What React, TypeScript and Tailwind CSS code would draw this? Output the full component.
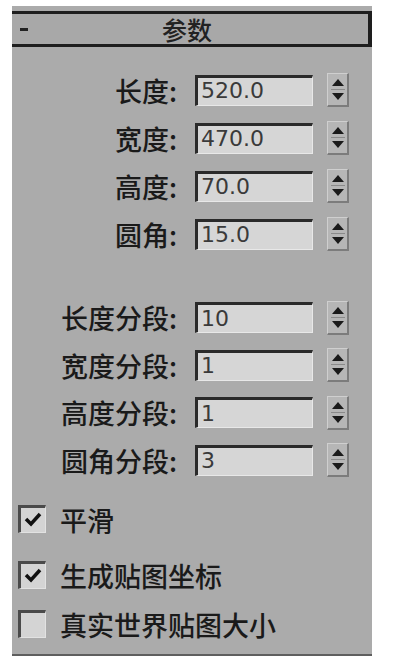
import React from "react";

const cjk = { fontFamily: '"Noto Sans CJK SC", "Noto Sans", sans-serif' };
const num = { fontFamily: '"DejaVu Sans", "Liberation Sans", sans-serif' };

function Spinner() {
  return (
    <div className="w-[22px] h-[34px] bg-[#b6b6b6] border-t border-l border-[#cfcfcf] border-r-2 border-b-2 border-r-[#7c7c7c] border-b-[#7c7c7c] flex flex-col items-center justify-between py-[5px]">
      <svg width="12" height="7" viewBox="0 0 12 7">
        <polygon points="6,0 12,7 0,7" fill="#1a1a1a" />
      </svg>
      <div className="w-[14px] h-px bg-[#8a8a8a]" />
      <svg width="12" height="7" viewBox="0 0 12 7">
        <polygon points="0,0 12,0 6,7" fill="#1a1a1a" />
      </svg>
    </div>
  );
}

function Field({ label, value }: { label: string; value: string }) {
  return (
    <div className="flex items-center h-full">
      <div className="w-[165px] text-right text-[27px] font-medium text-[#1a1a1a] leading-none" style={cjk}>
        {label}:
      </div>
      <div className="ml-[18px] w-[118px] h-[31px] bg-[#d6d6d6] border-t-[3px] border-l-[3px] border-[#2a2a2a] border-r border-b border-r-[#e8e8e8] border-b-[#e8e8e8] flex items-center pl-[3px]">
        <span className="text-[22px] text-[#3a3a3a] leading-none" style={num}>
          {value}
        </span>
      </div>
      <div className="ml-[14px]">
        <Spinner />
      </div>
    </div>
  );
}

function Check({ label, checked }: { label: string; checked: boolean }) {
  return (
    <div className="flex items-center h-[30px] pl-[6px]">
      <div className="w-[28px] h-[28px] bg-[#d4d4d4] border-t-[3px] border-l-[3px] border-[#4a4a4a] border-r border-b border-r-[#e2e2e2] border-b-[#e2e2e2] flex items-center justify-center">
        {checked && (
          <svg width="18" height="16" viewBox="0 0 18 16">
            <path d="M2 7 L7 12 L16 2" stroke="#111" strokeWidth="3.5" fill="none" />
          </svg>
        )}
      </div>
      <div className="ml-[14px] text-[27px] font-medium text-[#1a1a1a] leading-none" style={cjk}>
        {label}
      </div>
    </div>
  );
}

export default function App() {
  const sizes = [
    { label: "长度", value: "520.0" },
    { label: "宽度", value: "470.0" },
    { label: "高度", value: "70.0" },
    { label: "圆角", value: "15.0" },
  ];
  const segs = [
    { label: "长度分段", value: "10" },
    { label: "宽度分段", value: "1" },
    { label: "高度分段", value: "1" },
    { label: "圆角分段", value: "3" },
  ];

  return (
    <div className="w-full h-[672px] bg-white pt-[6px]">
      <div className="ml-[12px] w-[360px] h-[650px] bg-[#ababab] border-b-2 border-[#5e5e5e] pt-[5px]">
        <div className="h-[36px] bg-[#a8a8a8] border-t-[3px] border-b-[3px] border-r-[4px] border-[#1e1e1e] flex items-center relative">
          <span className="ml-[8px] w-[8px] h-[3px] bg-[#222]" />
          <span className="absolute left-[150px] text-[25px] font-medium text-[#222] leading-none" style={cjk}>
            参数
          </span>
        </div>

        <div className="mt-[19px]">
          {sizes.map((s) => (
            <div key={s.label} className="h-[48px]">
              <Field label={s.label} value={s.value} />
            </div>
          ))}
        </div>

        <div className="mt-[36px]">
          {segs.map((s) => (
            <div key={s.label} className="h-[47.5px]">
              <Field label={s.label} value={s.value} />
            </div>
          ))}
        </div>

        <div className="mt-[20px]">
          <Check label="平滑" checked />
        </div>
        <div className="mt-[26px]">
          <Check label="生成贴图坐标" checked />
        </div>
        <div className="mt-[19px]">
          <Check label="真实世界贴图大小" checked={false} />
        </div>
      </div>
    </div>
  );
}
